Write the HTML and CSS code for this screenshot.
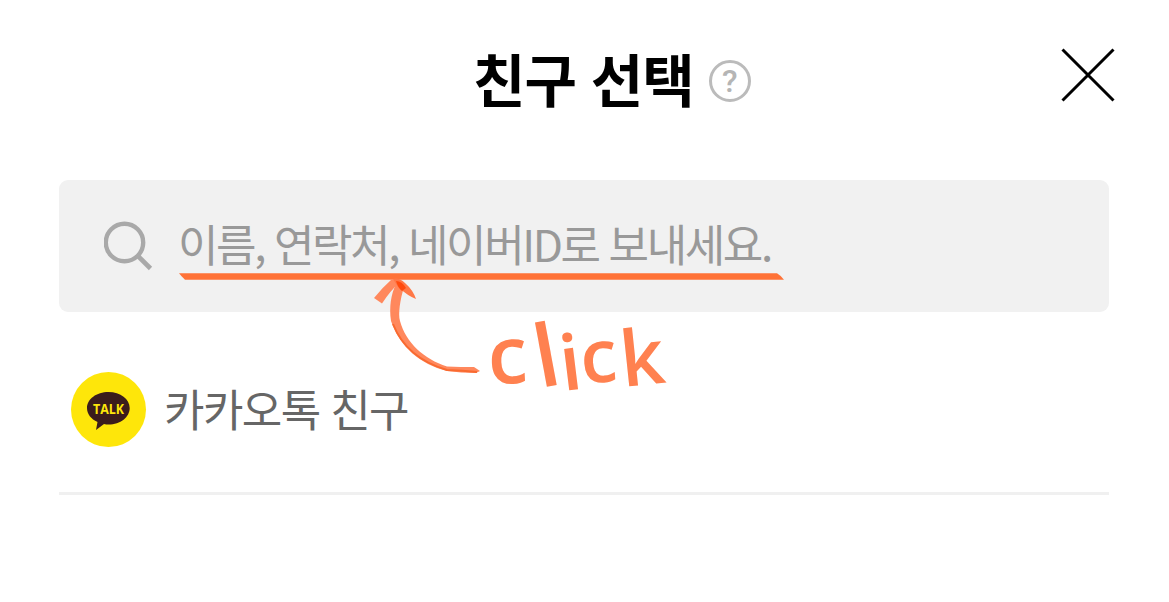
FILE: index.html
```html
<!DOCTYPE html>
<html lang="ko">
<head>
  <meta charset="UTF-8">
  <meta name="viewport" content="width=device-width, initial-scale=1.0">
  <title>친구 선택</title>
  <link rel="stylesheet" href="styles.css">
</head>
<body>
  <div class="page">
    <header class="header">
      <h1 class="title">친구 선택</h1>
      <button class="help" aria-label="도움말">?</button>
      <button class="close" aria-label="닫기">
        <svg width="54" height="54" viewBox="0 0 54 54">
          <path d="M1.5 1.5L52.5 52.5M52.5 1.5L1.5 52.5" fill="none" stroke="#000" stroke-width="3"/>
        </svg>
      </button>
    </header>

    <div class="search">
      <svg class="search-icon" width="50" height="50" viewBox="0 0 50 50">
        <circle cx="20.500" cy="21.500" r="18.700" fill="none" stroke="#a9a9a9" stroke-width="4.400"/>
        <path d="M33 34L46.500 47.500" fill="none" stroke="#a9a9a9" stroke-width="4.600"/>
      </svg>
      <span class="placeholder">이름, 연락처, 네이버ID로 보내세요.</span>
    </div>

    <div class="friend">
      <svg class="talk" width="76" height="76" viewBox="0 0 76 76">
        <circle cx="37.500" cy="37.500" r="37.500" fill="#fee60a"/>
        <path d="M37.500 20C49.500 20 58.700 27 58.700 36S49.500 52.500 37.500 52.500C36 52.500 34.500 52.400 33 52L25 58L26.500 50C20 47 16 42 16 36C16 27 25.500 20 37.500 20Z" fill="#3b1c1c"/>
        <text class="talk-text" x="37.500" y="41.500" text-anchor="middle" textLength="31" lengthAdjust="spacingAndGlyphs">TALK</text>
      </svg>
      <span class="friend-name">카카오톡 친구</span>
    </div>

    <!-- hand-drawn hint -->
    <svg class="hint" width="620" height="150" viewBox="170 265 620 150">
      <path d="M179 273.300H777Q780 275 784 279.700H185Q181 276 179 273.300Z" fill="#ff7237"/>
      <g fill="#ff885d">
        <path d="M392 279L400 282Q390 291 382 303.500L374 298Q383 287 392 279Z"/>
        <path d="M396 284L404 287C400 300 398 314 400 321C406 343 424 359 447 366.500Q461 367 474 367L480 371L476 373Q461 373 447 371C420 364 400 347 391 321C389 307 391 294 396 284Z"/>
      </g>
      <path d="M393 279Q399 277 405 283Q413 290 416 299Q408 296 398 287Z" fill="#ff7847"/>
      <path d="M396 281Q402 281 406 288L402 291Q398 288 396 281Z" fill="#ff4a0d"/>
      <path d="M393 324C402 347 420 362 447 370Q463 370.500 477 372" fill="none" stroke="#f96a30" stroke-width="2"/>
      <text class="hint-text" x="489 540 563 582 623" y="384.500 388 391 383.500 387" rotate="-3 -10.500 -7 -4 -6"><tspan class="wide">c</tspan><tspan class="tall">l</tspan>i<tspan class="small">c</tspan>k</text>
    </svg>
  </div>
</body>
</html>
```
FILE: styles.css
```css
body {
  margin: 0;
  background: #fff;
  font-family: "Noto Sans CJK KR", sans-serif;
}
button {
  padding: 0;
  border: 0;
  background: none;
  cursor: pointer;
}
.page {
  position: relative;
  box-sizing: border-box;
  height: 602px;
  padding: 0 60px 0 59px;
}
.header {
  display: flex;
  align-items: center;
  height: 162px;
  margin-bottom: 18px;
}
.title {
  margin: 0 0 9px 414px;
  font-size: 57px;
  font-weight: 700;
  line-height: 80px;
  letter-spacing: -1px;
  white-space: nowrap;
}
.help {
  box-sizing: border-box;
  width: 42px;
  height: 42px;
  margin-left: 15px;
  border: 3px solid #bbb;
  border-radius: 50%;
  color: #b5b5b5;
  font: 500 32px/36px Roboto, sans-serif;
}
.close {
  margin: 0 -6px 12px auto;
  line-height: 0;
}
.search {
  display: flex;
  align-items: center;
  box-sizing: border-box;
  height: 132px;
  padding-left: 45px;
  border-radius: 9px;
  background: #f1f1f1;
}
.search-icon {
  margin-right: 24px;
}
.placeholder {
  margin-bottom: 6px;
  color: #999;
  font-size: 44px;
  line-height: 60px;
  letter-spacing: -2.4px;
  white-space: nowrap;
}
.friend {
  display: flex;
  align-items: center;
  box-sizing: border-box;
  height: 183px;
  padding: 15px 0 0 12px;
  border-bottom: 3px solid #f0f0f0;
}
.talk {
  margin-right: 17px;
}
.talk-text {
  fill: #fee60a;
  font: 700 14px "Open Sans", sans-serif;
}
.friend-name {
  margin-bottom: 3px;
  color: #666;
  font-size: 44px;
  line-height: 60px;
  letter-spacing: -1.6px;
}
.hint {
  position: absolute;
  left: 170px;
  top: 265px;
}
.hint-text {
  fill: #ff8150;
  font: 600 77px "Open Sans", sans-serif;
}
.hint-text .wide {
  font-size: 80px;
}
.hint-text .tall {
  font-size: 86px;
}
.hint-text .small {
  font-size: 74px;
}
```
